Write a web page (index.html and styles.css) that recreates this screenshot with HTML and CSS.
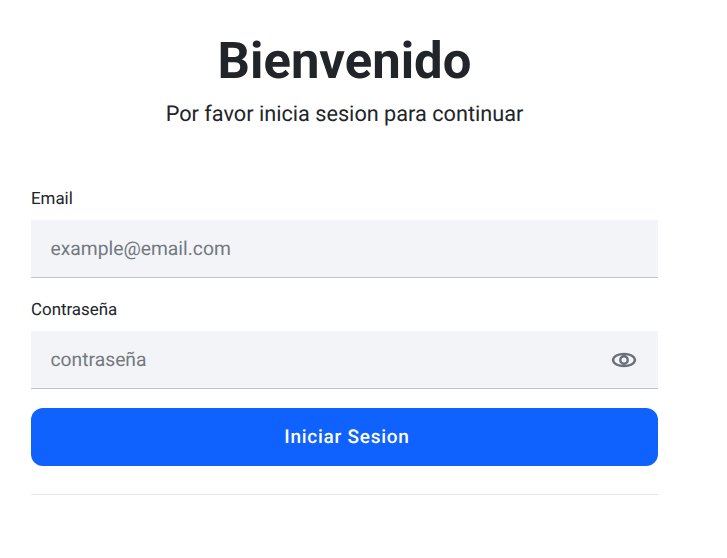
FILE: index.html
```html
<!DOCTYPE html>
<html lang="es">
<head>
<meta charset="utf-8">
<title>Iniciar Sesion</title>
<link rel="stylesheet" href="styles.css">
</head>
<body>
<main class="login">
  <header class="intro">
    <h1 class="title">Bienvenido</h1>
    <p class="subtitle">Por favor inicia sesion para continuar</p>
  </header>
  <form class="form">
    <label class="label" for="email">Email</label>
    <div class="field"><input class="input" id="email" type="email" placeholder="example@email.com"></div>
    <label class="label" for="password">Contraseña</label>
    <div class="field field-password">
      <input class="input" id="password" type="password" placeholder="contraseña">
      <button class="toggle" type="button" aria-label="Mostrar">
        <svg class="eye" viewBox="0 0 26 18" fill="none" stroke="currentColor" stroke-width="2.4"><path d="M2 9C2.600 5.200 7.200 3 13 3S23.400 5.200 24 9C23.400 12.800 18.800 15 13 15S2.600 12.800 2 9Z"/><circle cx="13" cy="9" r="3.700"/></svg>
      </button>
    </div>
    <button class="submit" type="button">Iniciar Sesion</button>
  </form>
  <hr class="divider">
</main>
</body>
</html>
```
FILE: styles.css
```css
* { box-sizing: border-box; }
body { margin: 0; background: #fff; color: #212529; font-family: Roboto, sans-serif; text-rendering: geometricPrecision; }
.login { width: 627px; margin-left: 31px; padding-top: 31px; }
.intro { text-align: center; height: 157px; }
.title { margin: 0; font-size: 50.8px; line-height: 62px; font-weight: 700; }
.subtitle { margin: 5px 0 0; font-size: 21.7px; line-height: 34px; }
.form { display: flex; flex-direction: column; }
.label { font-size: 16.9px; line-height: 23px; margin-bottom: 9px; }
.field { display: flex; align-items: center; height: 58px; margin-bottom: 21px; padding: 0 21px 0 19.5px; background: #f2f4f8; border-bottom: 1px solid #c1c4cc; }
.field-password { margin-bottom: 19px; }
.input { flex: 1; min-width: 0; padding: 0; border: 0; outline: 0; background: transparent; color: #212529; font: 19.3px/30px Roboto, sans-serif; text-rendering: geometricPrecision; }
.input::placeholder { color: #747980; opacity: 1; }
.toggle { display: flex; padding: 0; border: 0; background: none; color: #697077; }
.eye { width: 26px; height: 18px; }
.submit { height: 58px; padding: 0 0 1px 5px; border: 0; border-radius: 12px; background: #0f62fe; color: #fff; font: 500 19px/24px Roboto, sans-serif; letter-spacing: .75px; text-rendering: geometricPrecision; }
.divider { height: 1px; margin: 28px 0 0; border: 0; background: #e3e5e8; }
```
